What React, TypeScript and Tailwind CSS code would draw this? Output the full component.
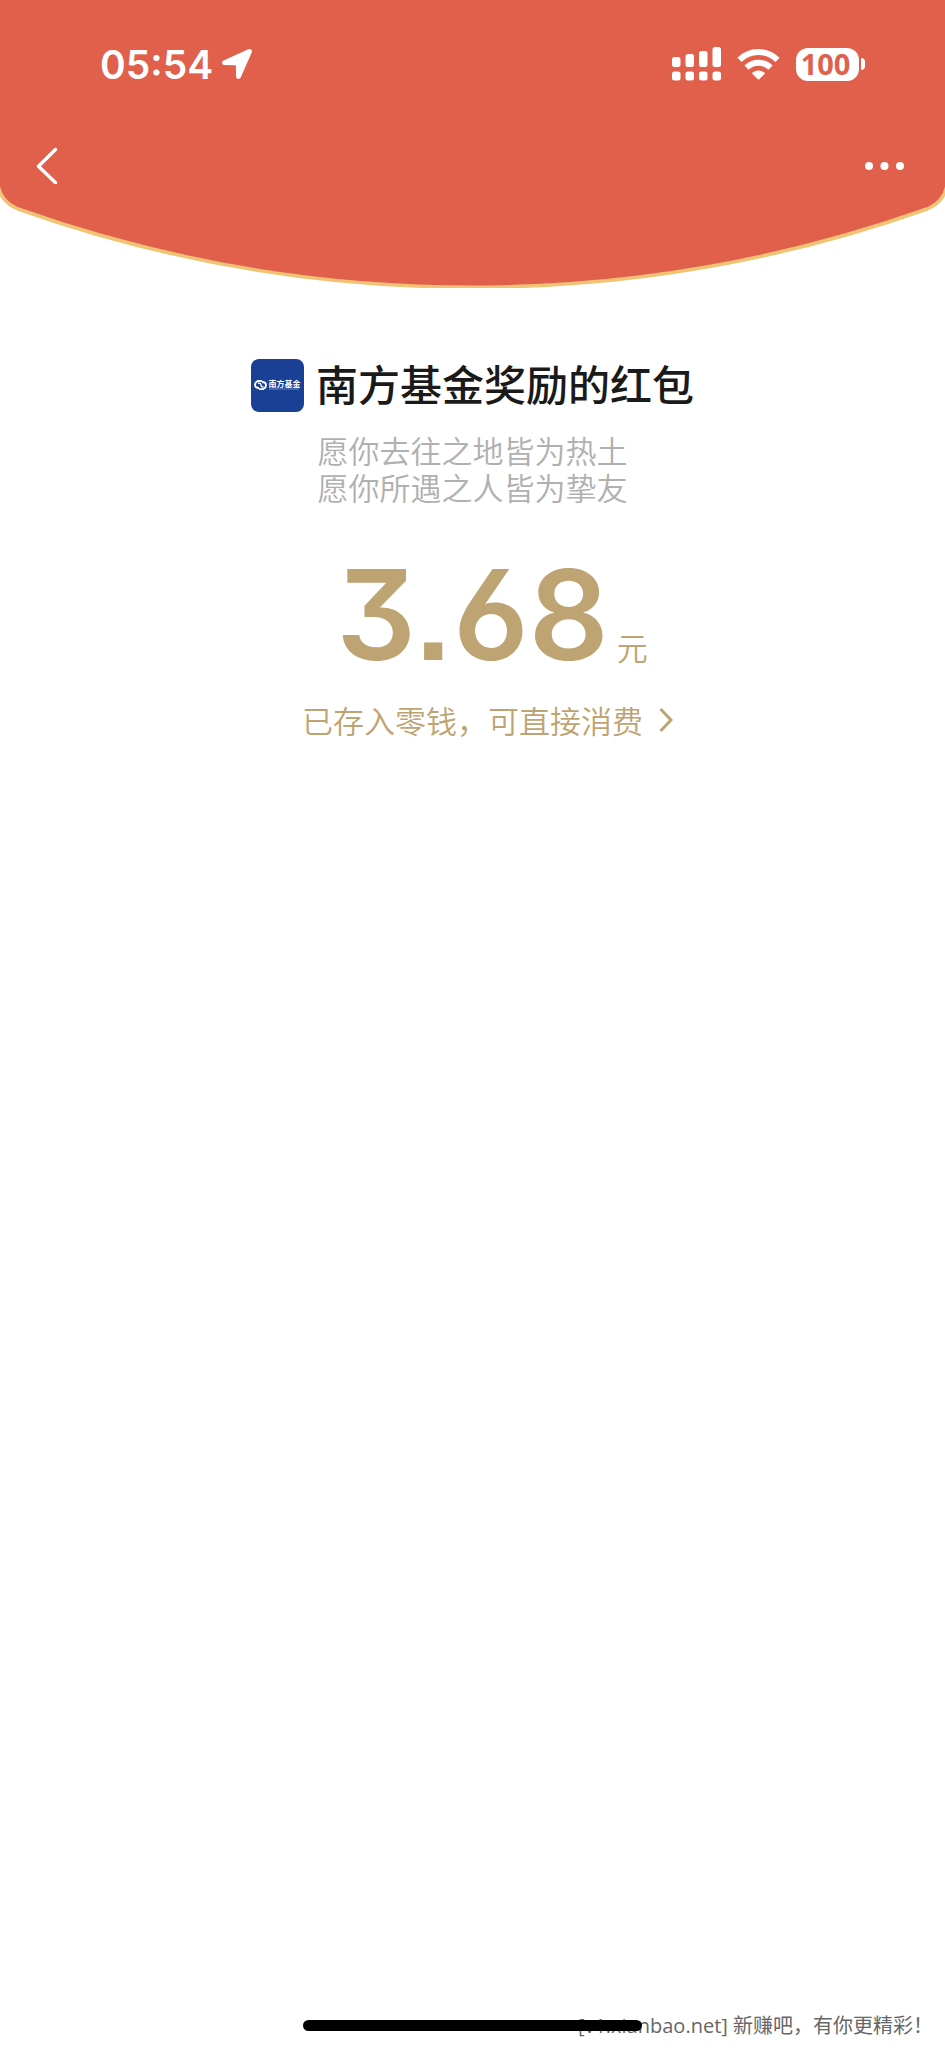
import React from "react"

const greeting = ["愿你去往之地皆为热土", "愿你所遇之人皆为挚友"]

function StatusBar() {
    return (
        <div className="flex h-32 items-center justify-between pr-20 pl-25 text-white">
            <div className="flex items-center gap-2">
                <span className="font-['Inter',sans-serif] text-[39px] leading-none font-semibold">
                    05:54
                </span>
                <svg width="32" height="32" viewBox="0 0 32 32" fill="currentColor">
                    <path d="M27.4 1.3 2.6 12.5C.2 13.7.7 16.8 3.4 17l10.500.2c.7 0 1 .3 1 1l.2 10.300c.1 2.900 3.500 3.400 4.700.8L30.700 4.400c1-2.300-1-4.100-3.300-3.100Z" />
                </svg>
            </div>
            <div className="flex items-center gap-4">
                <svg width="49" height="34" viewBox="0 0 49 34" fill="currentColor">
                    <rect x="0" y="10" width="8.500" height="10" rx="2.5" />
                    <rect x="13.500" y="7" width="8.500" height="13" rx="2.5" />
                    <rect x="27" y="4" width="8.500" height="16" rx="2.5" />
                    <rect x="40.500" y="0" width="8.500" height="20" rx="2.5" />
                    <rect x="0" y="24.500" width="8.500" height="9" rx="2.5" />
                    <rect x="13.500" y="24.500" width="8.500" height="9" rx="2.5" />
                    <rect x="27" y="24.500" width="8.500" height="9" rx="2.5" />
                    <rect x="40.500" y="24.500" width="8.500" height="9" rx="2.5" />
                </svg>
                <svg width="43" height="32" viewBox="0 0 43 32">
                    <g fill="none" stroke="currentColor" strokeWidth="6">
                        <path d="M2.500 11.800a27 27 0 0 1 38 0" />
                        <path d="M9.500 19.600a17.500 17.500 0 0 1 24 0" />
                    </g>
                    <path
                        fill="currentColor"
                        d="M15.300 24.800q6.200-4.500 12.400 0 .5.500 0 1l-5.500 5.500q-.7.600-1.400 0l-5.500-5.500q-.5-.5 0-1Z"
                    />
                </svg>
                <div className="flex items-center gap-0.5">
                    <span className="flex h-[33px] w-[63px] items-center justify-center rounded-xl bg-white pr-1 pb-0.5 font-['Open_Sans',sans-serif] text-[29px] leading-none font-bold text-[#e0604c]">
                        100
                    </span>
                    <span className="h-3 w-1 rounded-r-full bg-white" />
                </div>
            </div>
        </div>
    )
}

function NavBar() {
    return (
        <nav className="flex h-14 items-center justify-between pt-5 pr-[39px] pl-9 text-white">
            <button type="button" aria-label="返回" className="cursor-pointer">
                <svg
                    width="22"
                    height="38"
                    viewBox="0 0 22 38"
                    fill="none"
                    stroke="currentColor"
                    strokeWidth="3.400"
                    strokeLinecap="round"
                    strokeLinejoin="round"
                >
                    <path d="M19.500 2.500 2.500 19.200l17 16.500" />
                </svg>
            </button>
            <button type="button" aria-label="更多" className="cursor-pointer">
                <svg width="42" height="10" viewBox="0 0 42 10" fill="currentColor">
                    <circle cx="5" cy="5" r="4" />
                    <circle cx="20.500" cy="5" r="4" />
                    <circle cx="36" cy="5" r="4" />
                </svg>
            </button>
        </nav>
    )
}

function Header() {
    return (
        <header>
            <div className="bg-[#e0604c]">
                <StatusBar />
                <NavBar />
            </div>
            {/* bottom edge of the envelope */}
            <svg
                className="block h-[104px] w-full"
                viewBox="0 0 945 104"
                preserveAspectRatio="none"
            >
                <path
                    d="M-3-4C-1 12 6 20 18 25A1360 1360 0 0 0 927 25C939 20 946 12 948-4Z"
                    fill="#e0604c"
                    stroke="#f0c474"
                    strokeWidth="3.500"
                />
            </svg>
        </header>
    )
}

function FundLogo() {
    return (
        <div className="flex h-[53px] w-[53px] items-center justify-center gap-px rounded-lg bg-[#1a4095] text-white">
            <svg width="13" height="10" viewBox="0 0 13 10" fill="none" stroke="currentColor">
                <path
                    d="M8 1C4 0 1 2 1 4.800 1 7 3 8 5 8M5 9c4 1 7-1 7-3.800C12 3 10 2 8 2"
                    strokeWidth="1.900"
                />
                <path d="M4 3.500c2-1 3 0 3 1.500s1 2.500 2.500 1.500" strokeWidth="1.400" />
            </svg>
            <div className="flex flex-col">
                <span className="text-[8px] leading-[8px] font-bold">南方基金</span>
                <svg width="32" height="2" viewBox="0 0 32 2">
                    <path
                        d="M1 1h30"
                        stroke="#8fa5d4"
                        strokeWidth="1"
                        strokeDasharray="1.500 .6"
                    />
                </svg>
            </div>
        </div>
    )
}

export default function App() {
    return (
        <div className="flex min-h-screen flex-col overflow-x-hidden bg-white font-['Noto_Sans_CJK_SC',sans-serif]">
            <Header />
            <main className="flex grow flex-col items-center pt-[67px]">
                <div className="flex items-center gap-3">
                    <FundLogo />
                    <h1 className="pb-1 text-[42px] leading-[56px] font-medium text-[#1a1a1a]">
                        南方基金奖励的红包
                    </h1>
                </div>
                <div className="mt-4 text-center text-[31px] leading-[37px] font-[350] text-[#b0b0b0]">
                    {greeting.map((line) => (
                        <p key={line}>{line}</p>
                    ))}
                </div>
                <div className="mt-11 grid w-full grid-cols-[1fr_auto_1fr] items-baseline text-[#bea472]">
                    <span className="col-start-2 font-['Inter',sans-serif] text-[125px] leading-[132px] font-semibold [font-feature-settings:'cv09','cv03','ss07']">
                        3.68
                    </span>
                    <span className="pl-2 text-[31px] leading-[37px] font-[350]">元</span>
                </div>
                <a
                    href="#"
                    className="mt-4 grid w-full grid-cols-[1fr_auto_1fr] items-center text-[31px] leading-[46px] font-[350] text-[#bea472]"
                >
                    <span className="col-start-2">已存入零钱，可直接消费</span>
                    <svg
                        className="ml-4"
                        width="14"
                        height="26"
                        viewBox="0 0 14 26"
                        fill="none"
                        stroke="currentColor"
                        strokeWidth="3"
                    >
                        <path d="m1.500 2 10.500 11L1.500 24" />
                    </svg>
                </a>
            </main>
            <footer className="relative flex h-11 items-center justify-end pr-3">
                <p className="font-['Open_Sans','Noto_Sans_CJK_SC',sans-serif] text-xl leading-none font-normal text-[#666]">
                    [v1.xianbao.net] 新赚吧，有你更精彩！
                </p>
                <div className="absolute inset-x-0 top-4 mx-auto h-[11px] w-[339px] rounded-full bg-black" />
            </footer>
        </div>
    )
}
